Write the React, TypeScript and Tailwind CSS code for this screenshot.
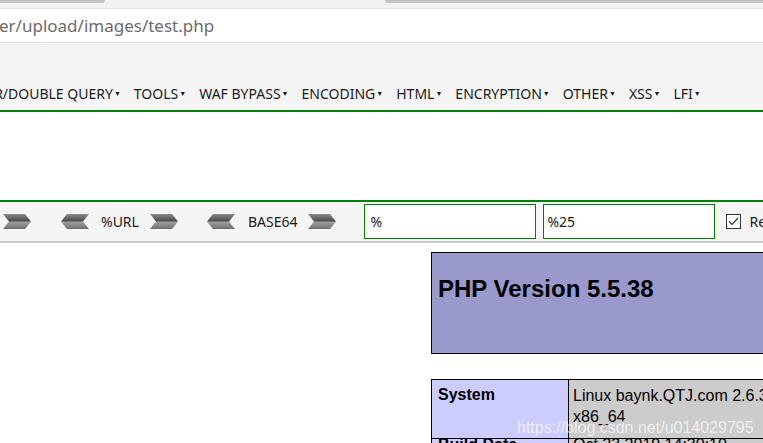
const menu = ['ERROR/DOUBLE QUERY', 'TOOLS', 'WAF BYPASS', 'ENCODING', 'HTML', 'ENCRYPTION', 'OTHER', 'XSS', 'LFI'];

function Arrow({ dir }: { dir: 'left' | 'right' }) {
  const id = `g-${dir}`;
  const pts = dir === 'right'
    ? '0,0 22,0 28,7.5 22,15 0,15 6,7.5'
    : '6,0 28,0 22,7.5 28,15 6,15 0,7.5';
  return (
    <svg width="28" height="15" viewBox="0 0 28 15" className="shrink-0">
      <defs>
        <linearGradient id={id} x1="0" y1="0" x2="0" y2="1">
          <stop offset="0" stopColor="#8c8c8c" />
          <stop offset="0.48" stopColor="#4a4a4a" />
          <stop offset="0.52" stopColor="#a0a0a0" />
          <stop offset="1" stopColor="#6e6e6e" />
        </linearGradient>
      </defs>
      <polygon points={pts} fill={`url(#${id})`} />
    </svg>
  );
}

export default function App() {
  return (
    <div className="w-[763px] h-[443px] overflow-hidden bg-white relative" style={{ fontFamily: '"Noto Sans", sans-serif' }}>
      {/* tab strip bottom */}
      <div className="h-[8px] bg-[#f2f2f2] flex justify-between">
        <div className="w-[105px] h-[3px] bg-[#c4c4c4] rounded-br-full" />
        <div className="w-[378px] h-[3px] bg-[#c4c4c4] rounded-bl-full" />
      </div>

      {/* address bar */}
      <div className="h-[35px] bg-white border-y border-[#e3e3e3] flex items-center text-[17px] text-[#6b6b6b] -ml-[1px]">
        er/upload/images/test.php
      </div>

      {/* hackbar menu */}
      <div className="h-[69px] bg-[#f5f5f5] border-b-2 border-[#008000] flex items-end pb-[6px]">
        <div className="flex gap-[13px] text-[14px] text-[#1a1a1a] whitespace-nowrap -ml-[42px] leading-[20px]">
          {menu.map((m) => (
            <span key={m} className="flex items-center shrink-0">
              {m}
              <span className="text-[7px] ml-[1px]">▼</span>
            </span>
          ))}
        </div>
      </div>

      {/* load url area */}
      <div className="h-[90px] bg-white border-b-2 border-[#008000]" />

      {/* encoding toolbar */}
      <div className="h-[41px] bg-[#f5f5f5] border-b-2 border-[#c8c8c8] flex items-center text-[14px] text-[#1a1a1a] whitespace-nowrap">
        <div className="ml-[3px] shrink-0"><Arrow dir="right" /></div>
        <div className="ml-[30px] shrink-0"><Arrow dir="left" /></div>
        <span className="ml-[12px] shrink-0">%URL</span>
        <div className="ml-[11px] shrink-0"><Arrow dir="right" /></div>
        <div className="ml-[29px] shrink-0"><Arrow dir="left" /></div>
        <span className="ml-[13px] shrink-0">BASE64</span>
        <div className="ml-[11px] shrink-0"><Arrow dir="right" /></div>
        <div className="ml-[28px] shrink-0 w-[172px] h-[35px] border-[1.5px] border-[#008000] bg-white flex items-center pl-[5px]">%</div>
        <div className="ml-[7px] shrink-0 w-[172px] h-[35px] border-[1.5px] border-[#008000] bg-white flex items-center pl-[3px]">%25</div>
        <div className="ml-[11px] shrink-0 w-[15px] h-[15px] border border-[#333] bg-white flex items-center justify-center">
          <svg width="11" height="9" viewBox="0 0 11 9"><polyline points="1,4.5 4,7.5 10,1" fill="none" stroke="#333" strokeWidth="1.2" /></svg>
        </div>
        <span className="ml-[8px] shrink-0">Replace</span>
      </div>

      {/* phpinfo */}
      <div className="pl-[431px] pt-[9px]" style={{ fontFamily: '"Liberation Sans", Arial, sans-serif' }}>
        <div className="w-[400px] h-[102px] bg-[#9999cc] border border-black pl-[6px] pt-[22px]">
          <h1 className="text-[24px] font-bold text-black leading-[28px]">PHP Version 5.5.38</h1>
        </div>
        <div className="mt-[25px] w-[400px] border border-black text-[16px] text-black">
          <div className="flex h-[59px] border-b border-black">
            <div className="w-[137px] bg-[#ccccff] border-r border-black pl-[6px] pt-[5px] font-bold leading-[20px]">System</div>
            <div className="flex-1 bg-[#cccccc] pl-[4px] pt-[5px] leading-[21px]">Linux baynk.QTJ.com 2.6.32-696 x86_64</div>
          </div>
          <div className="flex h-[40px] leading-[12px]">
            <div className="w-[137px] bg-[#ccccff] border-r border-black pl-[6px] font-bold">Build Date</div>
            <div className="flex-1 bg-[#cccccc] pl-[4px]">Oct 23 2019 14:30:10</div>
          </div>
        </div>
      </div>

      {/* watermark */}
      <div className="absolute left-[517px] top-[416px] text-[16px] text-white/70 whitespace-nowrap" style={{ fontFamily: '"Liberation Sans", Arial, sans-serif' }}>
        https://blog.csdn.net/u014029795
      </div>
    </div>
  );
}
